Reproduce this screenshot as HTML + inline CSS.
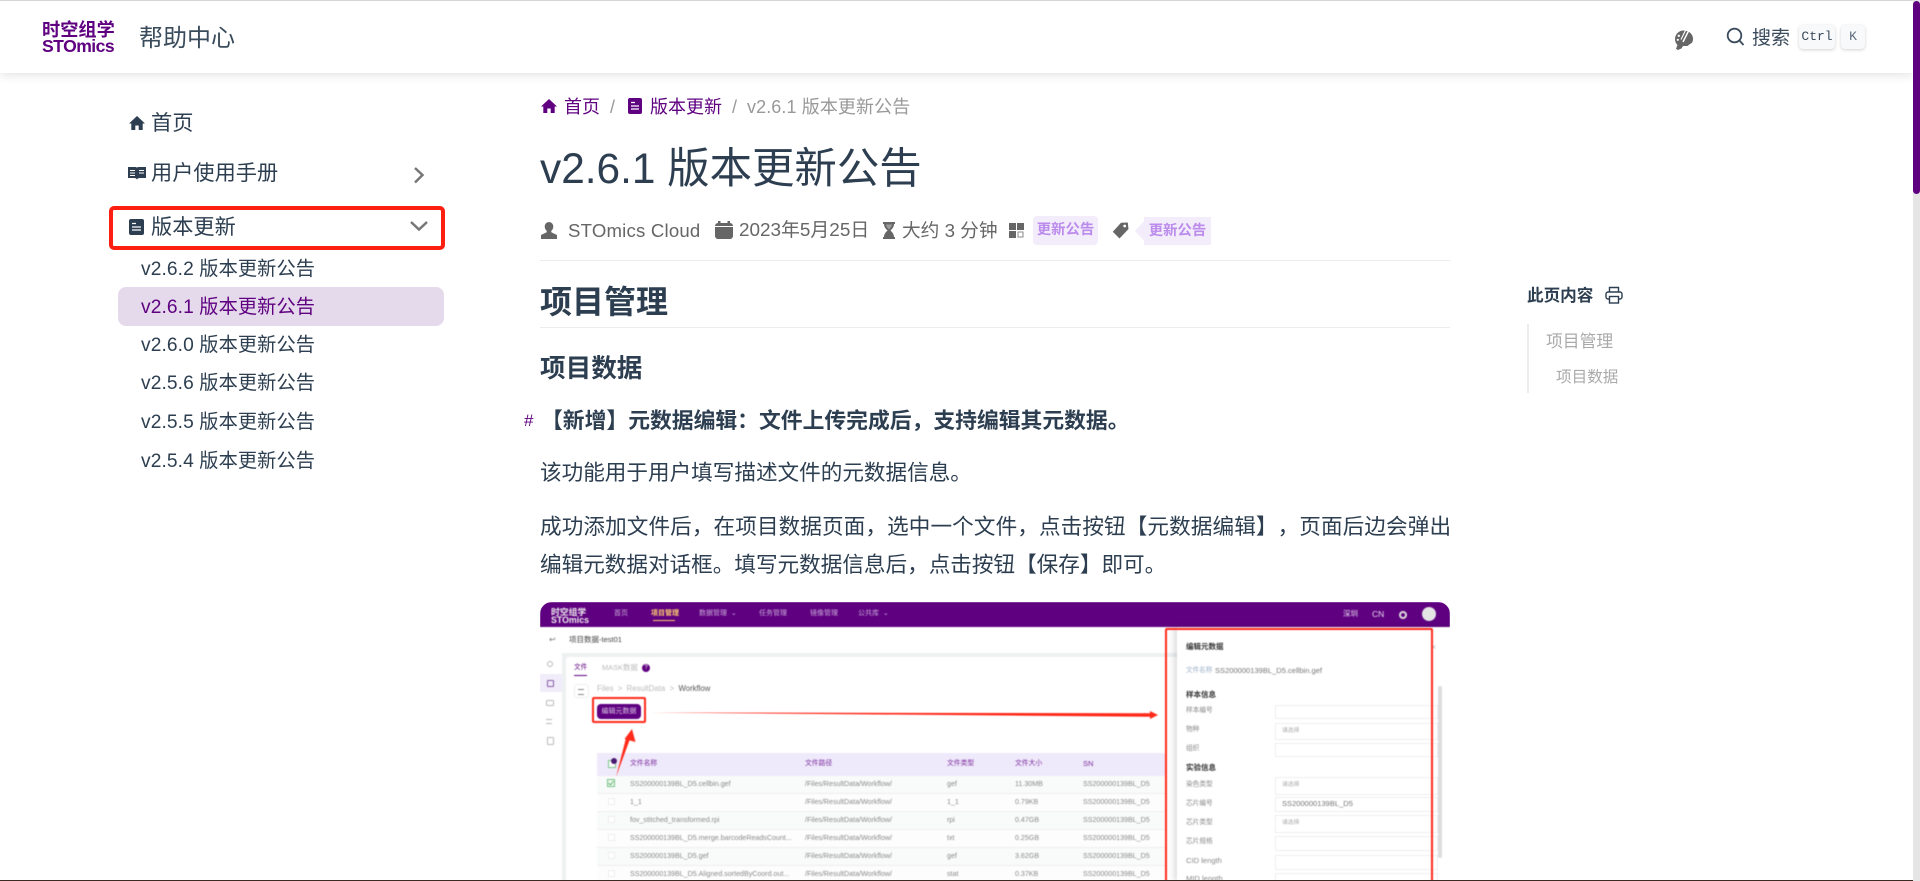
<!DOCTYPE html>
<html lang="zh"><head><meta charset="utf-8"><title>v2.6.1 版本更新公告</title>
<style>
html,body{margin:0;padding:0;width:1920px;height:881px;overflow:hidden;background:#fff}
body{position:relative;font-family:"Liberation Sans","Noto Sans CJK SC",sans-serif;color:#2c3e50;text-spacing-trim:space-all}
.t{position:absolute;white-space:nowrap;line-height:30px;height:30px}
.a{position:absolute}
svg{position:absolute;display:block}
#shot{position:absolute;left:540px;top:602px;width:910px;height:279px;overflow:hidden;border-radius:12px 12px 0 0;background:#fff}
#blur{position:absolute;left:-540px;top:-602px;width:1920px;height:881px;filter:blur(.6px)}
#blur .t{height:14px;line-height:14px;font-size:7.1px;color:#8a8a8a}
.inp{position:absolute;left:1275px;width:163px;border:1px solid #eee;box-sizing:border-box;background:#fff}
.hl{position:absolute;left:597px;width:568px;height:1px;background:#eeeeee}
</style></head><body>

<div class="a" style="left:0;top:0;width:1913px;height:1px;background:#ddd"></div>
<div class="a" style="left:0;top:1px;width:1913px;height:72px;background:#fff;box-shadow:0 2px 10px rgba(0,0,0,.12)"></div>

<!-- logo -->
<div class="t" style="left:42px;top:20px;height:20px;line-height:20px;font-size:18.2px;font-weight:700;color:#5f0080">时空组学</div>
<div class="t" style="left:42px;top:37px;height:18px;line-height:18px;font-size:17.6px;font-weight:700;letter-spacing:-.55px;color:#5f0080">STOmics</div>
<div class="t" style="left:139px;top:24px;font-size:24px;color:#3a4b5c">帮助中心</div>

<!-- palette -->
<svg style="left:1675px;top:29px" width="18" height="21" viewBox="0 0 18 21"><path d="M8.500 1.500C13.500 1.500 18 4.800 18 9.800 18 12.600 17 14.300 15 15L12.500 17 8 17 6.500 19.500 2.800 21 1 19.800 2.500 16C.8 14.500 0 12.300 0 10 0 5.300 3.800 1.500 8.500 1.500z" fill="#666"/><path d="M14.500 0L8 13" stroke="#fff" stroke-width="1.500"/><path d="M10.700 1L6 10.500" stroke="#fff" stroke-width="1.100"/><circle cx="3.800" cy="6.800" r="1.200" fill="#fff"/><circle cx="2.800" cy="10.800" r="1.100" fill="#fff"/></svg>
<!-- search -->
<svg style="left:1726px;top:27px" width="20" height="20" viewBox="0 0 20 20" fill="none" stroke="#3a4b5c" stroke-width="1.800"><circle cx="8.500" cy="8.500" r="6.800"/><path d="M13.500 13.500L17.500 18"/></svg>
<div class="t" style="left:1752px;top:24px;font-size:19px;color:#3a4b5c">搜索</div>
<div class="a" style="left:1799px;top:25px;width:36px;height:24px;background:#f8f9fa;border-radius:4px;box-shadow:0 1px 3px rgba(0,0,0,.18);font:13px/23px 'Liberation Mono',monospace;text-align:center;color:#3a4b5c">Ctrl</div>
<div class="a" style="left:1841px;top:25px;width:24px;height:24px;background:#f8f9fa;border-radius:4px;box-shadow:0 1px 3px rgba(0,0,0,.18);font:13px/23px 'Liberation Mono',monospace;text-align:center;color:#5b6b7b">K</div>

<!-- sidebar -->
<svg style="left:129px;top:115px" width="16" height="16" viewBox="0 0 16 16"><path d="M8 1L0 8.500h2.300V15h4V10.500h3.400V15h4V8.500H16z" fill="#2c3e50"/></svg>
<div class="t" style="left:151px;top:109px;font-size:21.2px;color:#2c3e50">首页</div>
<svg style="left:128px;top:166px" width="18" height="15" viewBox="0 0 18 15"><path d="M0 1h7.500c.7 0 1.200.3 1.500.8.300-.5.800-.8 1.500-.8H18v11h-6.500c-1 0-1.800.5-2.500 1.500-.7-1-1.500-1.500-2.500-1.500H0z" fill="#2c3e50"/><path d="M2 4.500h5M2 7h5M2 9.500h5M11 4.500h5M11 7h5" stroke="#fff" stroke-width="1"/></svg>
<div class="t" style="left:151px;top:159px;font-size:21.2px;color:#2c3e50">用户使用手册</div>
<svg style="left:412px;top:165px" width="14" height="20" viewBox="0 0 14 20" fill="none" stroke="#777" stroke-width="2.500"><path d="M3 3l7.500 7L3 17.500"/></svg>

<div class="a" style="left:109px;top:206px;width:336px;height:44px;border:4.500px solid #ff1f10;border-radius:5px;box-sizing:border-box"></div>
<svg style="left:129px;top:219px" width="15" height="16" viewBox="0 0 15 16"><rect width="15" height="16" rx="2" fill="#2c3e50"/><path d="M3 4.500h4M3 8h9M3 11h9" stroke="#fff" stroke-width="1.300"/></svg>
<div class="t" style="left:151px;top:213px;font-size:21.2px;color:#2c3e50">版本更新</div>
<svg style="left:409px;top:219px" width="20" height="14" viewBox="0 0 20 14" fill="none" stroke="#777" stroke-width="2.500"><path d="M2 3l8 7.500L18 3"/></svg>

<div class="a" style="left:118px;top:287px;width:326px;height:39px;background:#e5d9ec;border-radius:8px"></div>
<div class="t" style="left:141px;top:255px;font-size:19.2px;letter-spacing:.1px;color:#2c3e50">v2.6.2 版本更新公告</div>
<div class="t" style="left:141px;top:293px;font-size:19.2px;letter-spacing:.1px;color:#5f0080">v2.6.1 版本更新公告</div>
<div class="t" style="left:141px;top:331px;font-size:19.2px;letter-spacing:.1px;color:#2c3e50">v2.6.0 版本更新公告</div>
<div class="t" style="left:141px;top:369px;font-size:19.2px;letter-spacing:.1px;color:#2c3e50">v2.5.6 版本更新公告</div>
<div class="t" style="left:141px;top:408px;font-size:19.2px;letter-spacing:.1px;color:#2c3e50">v2.5.5 版本更新公告</div>
<div class="t" style="left:141px;top:447px;font-size:19.2px;letter-spacing:.1px;color:#2c3e50">v2.5.4 版本更新公告</div>

<!-- breadcrumb -->
<svg style="left:541px;top:98px" width="16" height="16" viewBox="0 0 16 16"><path d="M8 1L0 8.500h2.300V15h4V10.500h3.400V15h4V8.500H16z" fill="#5f0080"/></svg>
<div class="t" style="left:564px;top:92px;font-size:18px;color:#5f0080">首页</div>
<div class="t" style="left:610px;top:92px;font-size:18px;color:#999">/</div>
<svg style="left:628px;top:98px" width="14" height="16" viewBox="0 0 14 16"><rect width="14" height="16" rx="2" fill="#5f0080"/><path d="M3 4.500h4M3 8h8M3 11h8" stroke="#fff" stroke-width="1.200"/></svg>
<div class="t" style="left:650px;top:92px;font-size:18px;color:#5f0080">版本更新</div>
<div class="t" style="left:732px;top:92px;font-size:18px;color:#999">/</div>
<div class="t" style="left:747px;top:92px;font-size:18px;letter-spacing:.1px;color:#999">v2.6.1 版本更新公告</div>

<!-- title -->
<div class="t" style="left:540px;top:144px;height:50px;line-height:50px;font-size:42.4px;color:#2c3e50">v2.6.1 版本更新公告</div>

<!-- meta -->
<svg style="left:541px;top:222px" width="16" height="17" viewBox="0 0 16 17"><path d="M8 0a4.300 4.300 0 0 1 4.300 4.500c0 2-1 3.500-2 4.300v1.500L16 13v4H0v-4l5.700-2.700V8.800c-1-.8-2-2.300-2-4.300A4.300 4.300 0 0 1 8 0z" fill="#666"/></svg>
<div class="t" style="left:568px;top:216px;font-size:18.6px;color:#666;letter-spacing:.2px">STOmics Cloud</div>
<svg style="left:715px;top:221px" width="18" height="18" viewBox="0 0 18 18"><rect y="2" width="18" height="16" rx="3" fill="#666"/><rect x="3" width="2.500" height="4" fill="#666"/><rect x="12.500" width="2.500" height="4" fill="#666"/><path d="M0 5.500h18" stroke="#fff"/></svg>
<div class="t" style="left:739px;top:216px;font-size:18.9px;color:#666">2023年5月25日</div>
<svg style="left:882px;top:222px" width="14" height="17" viewBox="0 0 14 17"><path d="M1 0h12v2h-1c0 3-2 5-3.500 6.500C10 10 12 12 12 15h1v2H1v-2h1c0-3 2-5 3.500-6.500C4 7 2 5 2 2H1z" fill="#666"/><path d="M4 2.500h6c0 1.500-1.500 3.500-3 5-1.500-1.500-3-3.500-3-5z" fill="#fff" opacity=".35"/></svg>
<div class="t" style="left:902px;top:216px;font-size:18.7px;color:#666">大约 3 分钟</div>
<svg style="left:1009px;top:223px" width="15" height="15" viewBox="0 0 15 15"><rect width="7" height="7" fill="#666"/><rect x="8" width="7" height="7" fill="#666"/><rect y="8" width="7" height="7" fill="#666"/><rect x="9" y="9" width="5" height="5" fill="none" stroke="#888"/></svg>
<div class="a" style="left:1033px;top:216px;width:65px;height:29px;background:#f3ecfb;border-radius:4px;text-align:center;font:700 14.400px/29px 'Liberation Sans','Noto Sans CJK SC',sans-serif;color:#bb8cec">更新公告</div>
<svg style="left:1112px;top:222px" width="17" height="17" viewBox="0 0 17 17"><path d="M9 .8L15.800 .5 16.500 7 7.500 16.500.8 9.800z" fill="#666"/><circle cx="12.700" cy="4" r="1.400" fill="#fff"/></svg>
<svg style="left:1135px;top:217px" width="13" height="28" viewBox="0 0 13 28"><path d="M13 0v28L0 14z" fill="#f3ecfb"/></svg>
<div class="a" style="left:1144px;top:217px;width:67px;height:28px;background:#f3ecfb;text-align:center;font:700 14.400px/29px 'Liberation Sans','Noto Sans CJK SC',sans-serif;color:#bb8cec">更新公告</div>
<div class="a" style="left:540px;top:260px;width:910px;height:1px;background:#eaecef"></div>

<!-- content -->
<div class="t" style="left:540px;top:282px;height:40px;line-height:40px;font-size:32px;font-weight:700;color:#2c3e50">项目管理</div>
<div class="a" style="left:540px;top:327px;width:910px;height:1px;background:#eaecef"></div>
<div class="t" style="left:540px;top:354px;font-size:25.6px;font-weight:700;color:#2c3e50">项目数据</div>
<div class="t" style="left:524px;top:406px;font-size:17px;color:#5f0080">#</div>
<div class="t" style="left:541px;top:406px;font-size:21.8px;font-weight:700;color:#2c3e50">【新增】元数据编辑：文件上传完成后，支持编辑其元数据。</div>
<div class="t" style="left:540px;top:458px;font-size:21.6px;color:#2c3e50">该功能用于用户填写描述文件的元数据信息。</div>
<div class="t" style="left:540px;top:512px;font-size:21.6px;letter-spacing:.1px;color:#2c3e50">成功添加文件后，在项目数据页面，选中一个文件，点击按钮【元数据编辑】，页面后边会弹出</div>
<div class="t" style="left:540px;top:550px;font-size:21.6px;color:#2c3e50">编辑元数据对话框。填写元数据信息后，点击按钮【保存】即可。</div>

<!-- TOC -->
<div class="t" style="left:1527px;top:281px;font-size:16.600px;font-weight:700;color:#2c3e50">此页内容</div>
<svg style="left:1605px;top:286px" width="18" height="18" viewBox="0 0 18 18" fill="none" stroke="#2c3e50" stroke-width="1.400"><path d="M4.500 6V1.500h9V6"/><rect x="1" y="6" width="16" height="7" rx="2"/><rect x="4.500" y="10.500" width="9" height="6.500" fill="#fff"/></svg>
<div class="a" style="left:1527px;top:324px;width:2px;height:69px;background:#eaecef"></div>
<div class="t" style="left:1546px;top:327px;font-size:16.800px;color:#aaa">项目管理</div>
<div class="t" style="left:1556px;top:363px;font-size:15.600px;color:#aaa">项目数据</div>

<!-- screenshot -->
<div id="shot"><div id="blur">
  <div class="a" style="left:540px;top:602px;width:910px;height:25px;background:#5f0080"></div>
  <div class="a" style="left:551px;top:608px;font:700 8.800px/8px 'Liberation Sans','Noto Sans CJK SC',sans-serif;color:#eee;white-space:nowrap">时空组学<br>STOmics</div>
  <div class="t" style="left:614px;top:607px;color:#c9a9d9;font-size:7px">首页</div>
  <div class="t" style="left:651px;top:607px;color:#ffcf6e;font-size:7px;font-weight:700">项目管理</div>
  <div class="a" style="left:653px;top:620px;width:22px;height:1px;background:#ffcf6e"></div>
  <div class="t" style="left:699px;top:607px;color:#c9a9d9;font-size:7px">数据管理 &nbsp;⌄</div>
  <div class="t" style="left:759px;top:607px;color:#c9a9d9;font-size:7px">任务管理</div>
  <div class="t" style="left:810px;top:607px;color:#c9a9d9;font-size:7px">镜像管理</div>
  <div class="t" style="left:858px;top:607px;color:#c9a9d9;font-size:7px">公共库 &nbsp;⌄</div>
  <div class="t" style="left:1343px;top:607px;color:#e6d8ee;font-size:7.500px">深圳</div>
  <div class="t" style="left:1372px;top:607px;color:#e6d8ee;font-size:8.500px">CN</div>
  <div class="a" style="left:1399px;top:611px;width:4px;height:4px;border:2px solid #ddd;border-radius:50%"></div>
  <div class="a" style="left:1422px;top:607px;width:14px;height:14px;background:#e5e5e5;border-radius:50%"></div>

  <div class="t" style="left:549px;top:633px;color:#777;font-size:8px">↩</div>
  <div class="t" style="left:569px;top:633px;color:#444;font-size:7.500px">项目数据-test01</div>

  <div class="a" style="left:562px;top:653px;width:615px;height:228px;background:#eef1f2"></div>
  <div class="a" style="left:540px;top:653px;width:22px;height:228px;background:#fff"></div>
  <div class="a" style="left:566px;top:657px;width:612px;height:224px;background:#fff;border-radius:3px 0 0 0"></div>

  <div class="a" style="left:540px;top:674px;width:22px;height:18px;background:#f1ecf9"></div>
  <div class="a" style="left:547px;top:661px;width:4px;height:4px;border:1px solid #bbb;border-radius:50%"></div>
  <div class="a" style="left:547px;top:680px;width:5px;height:5px;border:1px solid #8a5aa8;border-radius:1px"></div>
  <div class="a" style="left:546px;top:700px;width:6px;height:4px;border:1px solid #bbb;border-radius:1px"></div>
  <div class="a" style="left:546px;top:719px;width:6px;height:3px;border-top:1px solid #bbb;border-bottom:1px solid #bbb"></div>
  <div class="a" style="left:547px;top:737px;width:5px;height:6px;border:1px solid #bbb;border-radius:1px"></div>

  <div class="t" style="left:574px;top:661px;color:#5f0080;font-size:6.600px">文件</div>
  <div class="a" style="left:574px;top:675px;width:13px;height:1px;background:#5f0080"></div>
  <div class="t" style="left:602px;top:661px;color:#bbb;font-size:7.400px">MASK数据</div>
  <div class="a" style="left:642px;top:664px;width:8px;height:8px;border-radius:50%;background:#5f0080;color:#fff;font-size:6px;line-height:8px;text-align:center">?</div>
  <div class="a" style="left:574px;top:684px;width:15px;height:14px;border:1px solid #eee;border-radius:3px;box-sizing:border-box"></div>
  <div class="a" style="left:578px;top:689px;width:6px;height:4px;border-top:1px solid #888;border-bottom:1px solid #888"></div>
  <div class="t" style="left:597px;top:682px;color:#bbb;font-size:7.800px">Files &nbsp;&gt;&nbsp; ResultData &nbsp;&gt;&nbsp; <span style="color:#555">Workflow</span></div>

  <div class="a" style="left:592px;top:697px;width:54px;height:26px;border:2px solid #ff2a1a;border-radius:2px;box-sizing:border-box"></div>
  <div class="a" style="left:597px;top:704px;width:44px;height:15px;background:#5f0080;border-radius:4px;color:#d9c5e4;font-size:7px;line-height:15px;text-align:center">编辑元数据</div>

  <div class="a" style="left:597px;top:753px;width:568px;height:23px;background:#efeafb"></div>
  <div class="t" style="left:630px;top:757px;color:#7a2a9c;font-size:6.800px">文件名称</div>
  <div class="t" style="left:805px;top:757px;color:#7a2a9c;font-size:6.800px">文件路径</div>
  <div class="t" style="left:947px;top:757px;color:#7a2a9c;font-size:6.800px">文件类型</div>
  <div class="t" style="left:1015px;top:757px;color:#7a2a9c;font-size:6.800px">文件大小</div>
  <div class="t" style="left:1083px;top:757px;color:#7a2a9c;font-size:7.500px">SN</div>
  <div class="a" style="left:608px;top:760px;width:6px;height:6px;border:1px solid #7cc48a;background:#fff"></div>
  <div class="a" style="left:611px;top:758px;width:6px;height:6px;border-radius:50%;background:#4a1a70"></div>

  <div class="a" style="left:597px;top:776px;width:568px;height:105px;background:#f9fafa"></div>
  <div class="a" style="left:597px;top:793px;width:568px;height:18px;background:#fdfdfd"></div>
  <div class="a" style="left:597px;top:829px;width:568px;height:18px;background:#fdfdfd"></div>
  <div class="a" style="left:597px;top:865px;width:568px;height:16px;background:#fdfdfd"></div>
  <div class="hl" style="top:793px"></div><div class="hl" style="top:811px"></div><div class="hl" style="top:829px"></div><div class="hl" style="top:847px"></div><div class="hl" style="top:865px"></div>

  <svg style="left:607px;top:779px" width="8" height="8" viewBox="0 0 8 8"><rect x=".5" y=".5" width="7" height="7" fill="#eef8f0" stroke="#7cc48a"/><path d="M1.500 4l2 2 3-4" fill="none" stroke="#58b368" stroke-width=".9"/></svg>
  <div class="a" style="left:608px;top:798px;width:5px;height:5px;border:1px solid #eee;background:#fff"></div>
  <div class="a" style="left:608px;top:816px;width:5px;height:5px;border:1px solid #eee;background:#fff"></div>
  <div class="a" style="left:608px;top:834px;width:5px;height:5px;border:1px solid #eee;background:#fff"></div>
  <div class="a" style="left:608px;top:852px;width:5px;height:5px;border:1px solid #eee;background:#fff"></div>
  <div class="a" style="left:608px;top:870px;width:5px;height:5px;border:1px solid #eee;background:#fff"></div>

  <div class="t" style="left:630px;top:777px">SS200000139BL_D5.cellbin.gef</div>
  <div class="t" style="left:630px;top:795px">1_1</div>
  <div class="t" style="left:630px;top:813px">fov_stitched_transformed.rpi</div>
  <div class="t" style="left:630px;top:831px">SS200000139BL_D5.merge.barcodeReadsCount...</div>
  <div class="t" style="left:630px;top:849px">SS200000139BL_D5.gef</div>
  <div class="t" style="left:630px;top:867px">SS200000139BL_D5.Aligned.sortedByCoord.out...</div>

  <div class="t" style="left:805px;top:777px">/Files/ResultData/Workflow/</div>
  <div class="t" style="left:805px;top:795px">/Files/ResultData/Workflow/</div>
  <div class="t" style="left:805px;top:813px">/Files/ResultData/Workflow/</div>
  <div class="t" style="left:805px;top:831px">/Files/ResultData/Workflow/</div>
  <div class="t" style="left:805px;top:849px">/Files/ResultData/Workflow/</div>
  <div class="t" style="left:805px;top:867px">/Files/ResultData/Workflow/</div>

  <div class="t" style="left:947px;top:777px">gef</div>
  <div class="t" style="left:947px;top:795px">1_1</div>
  <div class="t" style="left:947px;top:813px">rpi</div>
  <div class="t" style="left:947px;top:831px">txt</div>
  <div class="t" style="left:947px;top:849px">gef</div>
  <div class="t" style="left:947px;top:867px">stat</div>

  <div class="t" style="left:1015px;top:777px">11.30MB</div>
  <div class="t" style="left:1015px;top:795px">0.79KB</div>
  <div class="t" style="left:1015px;top:813px">0.47GB</div>
  <div class="t" style="left:1015px;top:831px">0.25GB</div>
  <div class="t" style="left:1015px;top:849px">3.62GB</div>
  <div class="t" style="left:1015px;top:867px">0.37KB</div>

  <div class="t" style="left:1083px;top:777px">SS200000139BL_D5</div>
  <div class="t" style="left:1083px;top:795px">SS200000139BL_D5</div>
  <div class="t" style="left:1083px;top:813px">SS200000139BL_D5</div>
  <div class="t" style="left:1083px;top:831px">SS200000139BL_D5</div>
  <div class="t" style="left:1083px;top:849px">SS200000139BL_D5</div>
  <div class="t" style="left:1083px;top:867px">SS200000139BL_D5</div>

  <!-- modal -->
  <div class="a" style="left:1177px;top:627px;width:273px;height:254px;background:#fff;box-shadow:-3px 0 6px rgba(0,0,0,.14)"></div>
  <div class="t" style="left:1186px;top:640px;color:#333;font-size:7.500px;font-weight:700">编辑元数据</div>
  <div class="t" style="left:1431px;top:640px;color:#bbb;font-size:9px">×</div>
  <div class="t" style="left:1186px;top:664px;color:#9db2c8;font-size:6.600px">文件名称</div>
  <div class="t" style="left:1215px;top:664px;color:#777;font-size:7.550px">SS200000139BL_D5.cellbin.gef</div>
  <div class="t" style="left:1186px;top:688px;color:#333;font-size:7.500px;font-weight:700">样本信息</div>
  <div class="t" style="left:1186px;top:704px;font-size:6.700px">样本编号</div>
  <div class="inp" style="top:705px;height:14px"></div>
  <div class="t" style="left:1186px;top:723px;font-size:6.700px">物种</div>
  <div class="inp" style="top:723px;height:17px"></div>
  <div class="t" style="left:1282px;top:724px;font-size:5.800px;color:#aaa">请选择</div>
  <div class="t" style="left:1186px;top:742px;font-size:6.700px">组织</div>
  <div class="inp" style="top:743px;height:14px"></div>
  <div class="t" style="left:1186px;top:761px;color:#333;font-size:7.500px;font-weight:700">实验信息</div>
  <div class="t" style="left:1186px;top:778px;font-size:6.700px">染色类型</div>
  <div class="inp" style="top:777px;height:18px"></div>
  <div class="t" style="left:1282px;top:778px;font-size:5.800px;color:#aaa">请选择</div>
  <div class="t" style="left:1186px;top:797px;font-size:6.700px">芯片编号</div>
  <div class="inp" style="top:797px;height:15px"></div>
  <div class="t" style="left:1282px;top:797px;color:#777;font-size:7.550px">SS200000139BL_D5</div>
  <div class="t" style="left:1186px;top:816px;font-size:6.700px">芯片类型</div>
  <div class="inp" style="top:815px;height:18px"></div>
  <div class="t" style="left:1282px;top:816px;font-size:5.800px;color:#aaa">请选择</div>
  <div class="t" style="left:1186px;top:835px;font-size:6.700px">芯片规格</div>
  <div class="inp" style="top:836px;height:15px"></div>
  <div class="t" style="left:1186px;top:854px;font-size:7.600px">CID length</div>
  <div class="inp" style="top:855px;height:15px"></div>
  <div class="t" style="left:1186px;top:872px;font-size:7.600px">MID length</div>
  <div class="inp" style="top:873px;height:15px"></div>
  <div class="a" style="left:1438px;top:686px;width:4px;height:172px;background:#ddd;border-radius:2px"></div>

  <!-- annotations -->
  <div class="a" style="left:1165px;top:628px;width:268px;height:260px;border:2px solid #ff2a1a;border-radius:2px;box-sizing:border-box"></div>
  <svg style="left:540px;top:602px" width="910" height="279" viewBox="540 602 910 279"><path d="M650 712.500L1150 713.200V716.800z" fill="#ff2a1a"/><path d="M1150 711l8 4-8 4z" fill="#ff2a1a"/><path d="M616 777L626 738 630 739z" fill="#ff2a1a"/><path d="M632 729l3.500 13-11-3z" fill="#ff2a1a"/></svg>
</div></div>

<!-- bottom line -->
<div class="a" style="left:0;top:880px;width:1913px;height:1px;background:#3a2a22"></div>

<!-- scrollbar -->
<div class="a" style="left:1913px;top:0;width:7px;height:881px;background:#e5e5e5"></div>
<div class="a" style="left:1913px;top:1px;width:7px;height:193px;background:#5f0080;border-radius:4px"></div>
</body></html>
